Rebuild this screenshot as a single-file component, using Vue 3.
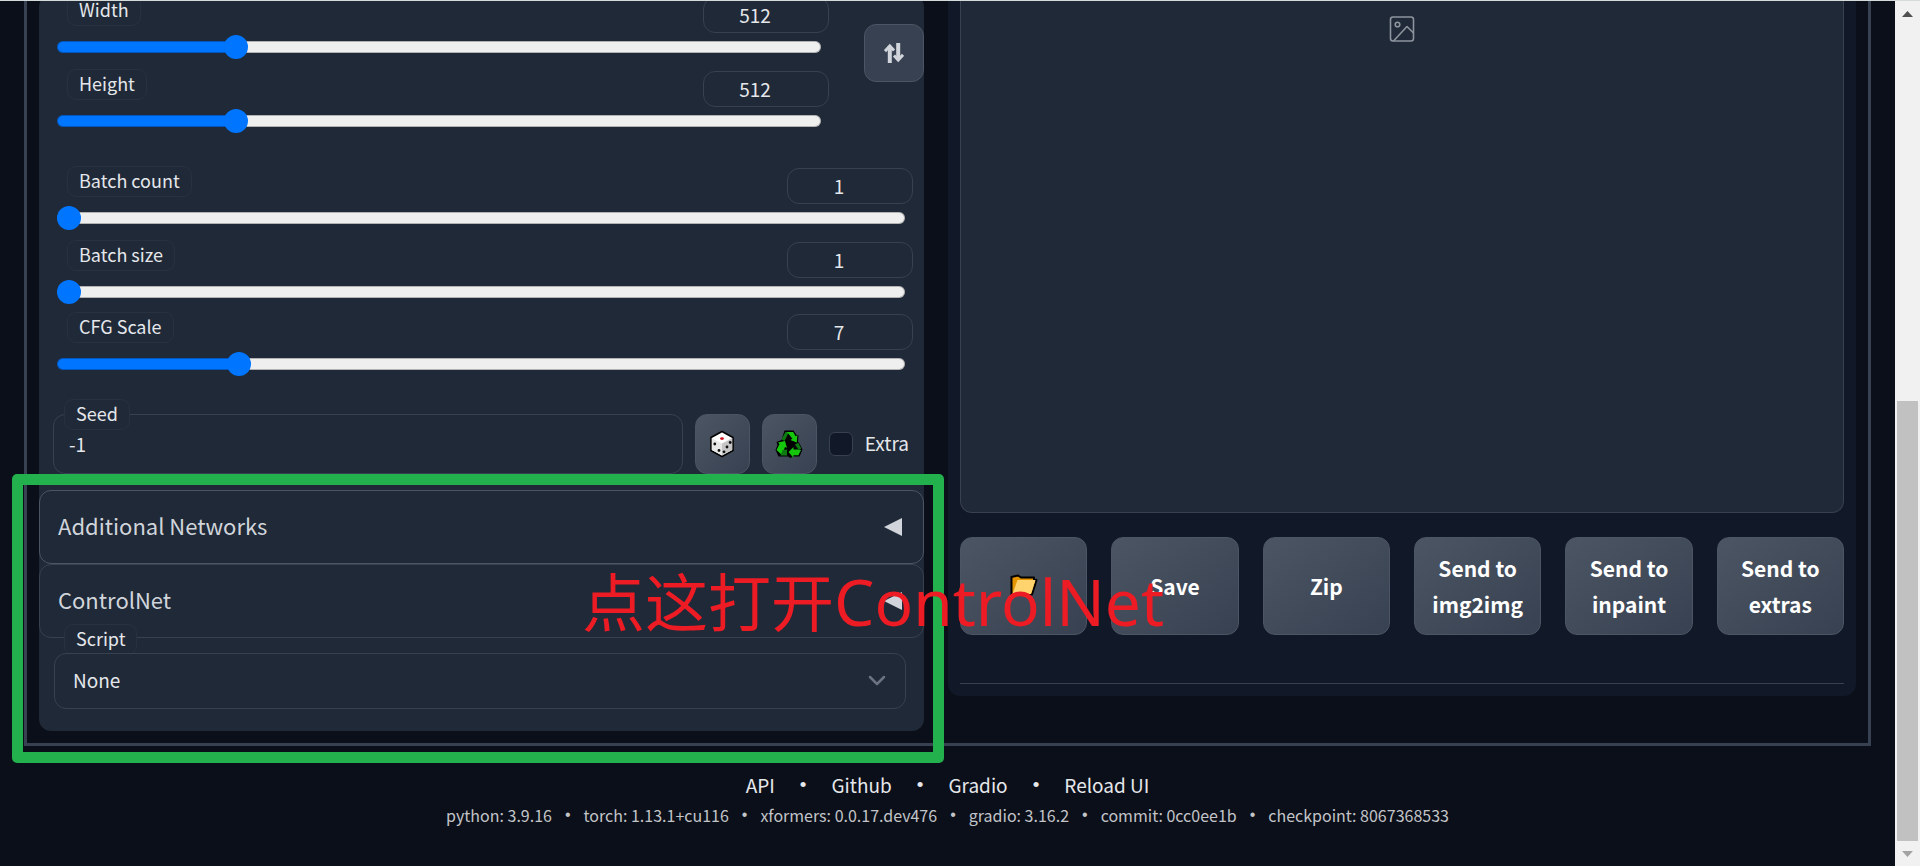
<script setup>
import { reactive, ref } from 'vue'

const size = reactive([
  { id: 'width', label: 'Width', value: 512, min: 64, max: 2048, step: 8 },
  { id: 'height', label: 'Height', value: 512, min: 64, max: 2048, step: 8 },
])
const batch = reactive([
  { id: 'batch-count', label: 'Batch count', value: 1, min: 1, max: 100, step: 1 },
  { id: 'batch-size', label: 'Batch size', value: 1, min: 1, max: 8, step: 1 },
])
const cfg = reactive([
  { id: 'cfg-scale', label: 'CFG Scale', value: 7, min: 1, max: 30, step: 0.5 },
])
const groups = [
  { name: 'batch', items: batch },
  { name: 'cfg', items: cfg },
]
const seed = ref('-1')
const extra = ref(false)
const script = ref('None')
const accordions = ['Additional Networks', 'ControlNet']
const actions = ['Save', 'Zip', 'Send to img2img', 'Send to inpaint', 'Send to extras']
const links = ['API', 'Github', 'Gradio', 'Reload UI']
const versions = [
  'python: 3.9.16',
  'torch: 1.13.1+cu116',
  'xformers: 0.0.17.dev476',
  'gradio: 3.16.2',
  'commit: 0cc0ee1b',
  'checkpoint: 8067368533',
]

const share = (s) => (s.value - s.min) / (s.max - s.min)

function swap() {
  const first = size[0].value
  size[0].value = size[1].value
  size[1].value = first
}
</script>

<template>
  <div class="window">
    <main class="page">
      <section class="tab">
        <div class="settings">
          <div class="dimensions">
            <div class="sliders">
              <div v-for="s in size" :key="s.id" class="slider">
                <div class="slider-head">
                  <label class="tag" :for="s.id">{{ s.label }}</label>
                  <input v-model.number="s.value" class="number" type="number" :aria-label="s.label + ' value'" />
                </div>
                <input
                  :id="s.id"
                  v-model.number="s.value"
                  class="range"
                  type="range"
                  :min="s.min"
                  :max="s.max"
                  :step="s.step"
                  :style="{ '--share': share(s) }"
                />
              </div>
            </div>
            <button class="tool swap" type="button" aria-label="Swap width and height" @click="swap">
              <svg width="20" height="20" viewBox="0 0 20 20" fill="none" stroke="currentColor" stroke-width="4">
                <path d="M5.800 20V3M14.200 0v17" />
                <path d="M1 8.200 5.800 3l4.200 4.600M10 12.400l4.200 4.600 4.800-5.200" stroke-width="3" />
              </svg>
            </button>
          </div>

          <div v-for="g in groups" :key="g.name" class="sliders" :class="g.name">
            <div v-for="s in g.items" :key="s.id" class="slider">
              <div class="slider-head">
                <label class="tag" :for="s.id">{{ s.label }}</label>
                <input v-model.number="s.value" class="number" type="number" :aria-label="s.label + ' value'" />
              </div>
              <input
                :id="s.id"
                v-model.number="s.value"
                class="range"
                type="range"
                :min="s.min"
                :max="s.max"
                :step="s.step"
                :style="{ '--share': share(s) }"
              />
            </div>
          </div>

          <div class="seed-row">
            <div class="seed">
              <label class="tag floating" for="seed">Seed</label>
              <input id="seed" v-model="seed" class="seed-input" type="text" />
            </div>
            <button class="tool" type="button" aria-label="Random seed" @click="seed = '-1'">
              <svg width="26" height="28" viewBox="0 0 26 28">
                <path d="M13 1.5 24 7.5V20.5L13 26.5 2 20.5V7.5Z" fill="#fff" stroke="#000" stroke-width="1.6" stroke-linejoin="round" />
                <path d="M2.8 8 13 13.5V25.6L2.8 20Z" fill="#e8e8e8" />
                <path d="M23.2 8 13 13.5V25.6L23.2 20Z" fill="#c6c6c6" />
                <ellipse cx="13" cy="8.6" rx="1.9" ry="1.4" fill="#d0101c" />
                <g fill="#111">
                  <circle cx="5.8" cy="14" r="1.4" />
                  <circle cx="10" cy="20.5" r="1.4" />
                  <circle cx="21.2" cy="12.5" r="1.4" />
                  <circle cx="18" cy="17" r="1.4" />
                  <circle cx="15" cy="21.8" r="1.4" />
                </g>
              </svg>
            </button>
            <button class="tool" type="button" aria-label="Reuse last seed">
              <svg width="28" height="28" viewBox="0 0 28 28" stroke-linejoin="round">
                <path d="M9.500.500h9l3 4.500 2 .500-.5 6 1.500 2 3 6-3 7H18l-2.500 1.500L13 26.500H3.500L.500 20l2-5-1-3 5-2Z" fill="#000" />
                <path d="M10.500 2 14 2l-4.500 9-3-1.800Z" fill="#0e7a12" />
                <path d="M12 2h6.200l2.400 4.200 1.800-1-.6 7.300-6.400-2.600 2-1.200Z" fill="#16c60c" />
                <path d="M3 12.500 10 11l2 7-2-1-3 8-5.500-5 3-6Z" fill="#16c60c" />
                <path d="m7.500 20 4.500-.5V25.500H5.500Z" fill="#0e7a12" />
                <path d="m13.500 22 5-5v2.400h4.500l3 .6-2.600 5.300h-5v2.400Z" fill="#16c60c" />
                <path d="m20 14.500 3.300-1.800 2.900 5.900-2.600 1.400Z" fill="#0e7a12" />
              </svg>
            </button>
            <label class="extra">
              <input v-model="extra" class="check" type="checkbox" />
              <span class="extra-text">Extra</span>
            </label>
          </div>

          <div class="accordions">
            <button v-for="a in accordions" :key="a" class="accordion" type="button">
              <span class="accordion-title">{{ a }}</span>
              <svg width="18" height="18" viewBox="0 0 18 18"><path d="M0 9 18 0v18Z" fill="#d1d5db" /></svg>
            </button>
          </div>

          <div class="script">
            <label class="tag script-tag" for="script">Script</label>
            <div class="select-wrap">
              <select id="script" v-model="script" class="select">
                <option>None</option>
              </select>
              <svg class="chevron" width="18" height="12" viewBox="0 0 18 12" fill="none">
                <path d="m2 2 7 7 7-7" stroke="#6b7280" stroke-width="2.500" stroke-linecap="round" stroke-linejoin="round" />
              </svg>
            </div>
          </div>
        </div>

        <div class="results">
          <div class="gallery">
            <svg width="26" height="26" viewBox="0 0 26 26" fill="none" stroke="#8d949e" stroke-width="1.600" stroke-linejoin="round">
              <rect x="1.500" y="1" width="23" height="24" rx="2.500" />
              <circle cx="8.500" cy="8.500" r="2.300" />
              <path d="M4.500 25 18 10.500l6.500 6.500" />
            </svg>
          </div>
          <div class="actions">
            <button class="action" type="button" aria-label="Open images folder">
              <svg width="28" height="24" viewBox="0 0 28 24" stroke-linejoin="round">
                <path d="M1.500 3 8 1.500l3 2h13V6h2.500L22 20.500H1.500Z" fill="#e59500" stroke="#000" stroke-width="2" />
                <path d="M7.500 6h18L21 20H2.500Z" fill="#ffd36e" />
              </svg>
            </button>
            <button v-for="a in actions" :key="a" class="action" type="button">{{ a }}</button>
          </div>
          <hr class="rule" />
        </div>
      </section>

      <footer class="footer">
        <nav class="links">
          <template v-for="(l, i) in links" :key="l">
            <span v-if="i" class="dot">•</span>
            <a href="#">{{ l }}</a>
          </template>
        </nav>
        <div class="versions">
          <template v-for="(v, i) in versions" :key="v">
            <span v-if="i" class="dot">•</span>
            <span>{{ v }}</span>
          </template>
        </div>
      </footer>
    </main>

    <div class="scrollbar" aria-hidden="true">
      <svg width="25" height="25" viewBox="0 0 25 25"><path d="M7 16 12.500 10 18 16Z" fill="#505050" /></svg>
      <div class="groove"><div class="handle"></div></div>
      <svg width="25" height="25" viewBox="0 0 25 25"><path d="M7 10 12.500 16 18 10Z" fill="#a3a3a3" /></svg>
    </div>

    <div class="highlight"></div>
    <p class="note">点这打开<span>ControlNet</span></p>
  </div>
</template>

<style>
body {
  background: #0b0f19;
}
</style>

<style scoped>
.window,
.window * {
  box-sizing: border-box;
}

.window {
  position: relative;
  display: flex;
  height: 100vh;
  overflow: hidden;
  border-top: 1px solid #d5dbda;
  background: #0b0f19;
  color: #e5e7eb;
  font-family: "Noto Sans CJK SC", "Noto Sans", sans-serif;
  font-size: 19px;
  line-height: 30px;
}

button,
input,
select {
  margin: 0;
  font: inherit;
  color: inherit;
}

.page {
  flex: 1;
  min-width: 0;
  display: flex;
  flex-direction: column;
  justify-content: flex-end;
  padding: 0 24px;
}

.tab {
  flex: none;
  display: grid;
  grid-template-columns: 885fr 908fr;
  gap: 24px;
  align-items: start;
  padding: 0 12px 12px;
  border: 3px solid #374151;
  border-top: 0;
}

.settings {
  padding-bottom: 22px;
  border-radius: 12px;
  background: #1f2937;
}

.dimensions {
  display: flex;
  gap: 24px;
  margin-bottom: 33px;
}

.sliders {
  flex: 1;
  display: flex;
  flex-direction: column;
  gap: 10px;
}

.cfg {
  margin-top: 8px;
}

.slider {
  height: 64px;
  padding: 0 19px 0 18px;
}

.slider-head {
  display: flex;
  justify-content: space-between;
  align-items: flex-start;
  height: 40px;
  margin-right: -8px;
  padding-left: 10px;
}

.tag {
  height: 31px;
  padding: 0 11px;
  border: 1px solid #28313f;
  border-radius: 9px;
  background: #1f2937;
  font-size: 18px;
  line-height: 27px;
}

.number {
  width: 126px;
  height: 36px;
  margin-top: 2px;
  padding: 0 32px 2px 10px;
  border: 1px solid #374151;
  border-radius: 12px;
  background: #1f2937;
  text-align: center;
  appearance: textfield;
}

.number::-webkit-inner-spin-button {
  appearance: none;
  margin: 0;
}

.range {
  display: block;
  width: 100%;
  height: 24px;
  appearance: none;
  background: none;
}

.range::-webkit-slider-runnable-track {
  height: 12px;
  border-radius: 6px;
  background: linear-gradient(
    to right,
    #0075ff calc(12px + (100% - 24px) * var(--share)),
    #efefef calc(12px + (100% - 24px) * var(--share))
  );
  box-shadow: inset 0 0 0 1px rgba(0, 0, 0, 0.25);
}

.range::-webkit-slider-thumb {
  appearance: none;
  width: 24px;
  height: 24px;
  margin-top: -6px;
  border-radius: 50%;
  background: #0075ff;
}

.tool {
  display: flex;
  align-items: center;
  justify-content: center;
  width: 55px;
  height: 60px;
  padding: 0;
  border: 1px solid #4b5563;
  border-radius: 12px;
  background: linear-gradient(to bottom right, #4b5563, #374151);
}

.swap {
  width: 60px;
  height: 58px;
  margin-top: 29px;
  background: #374151;
  color: #d1d5db;
}

.seed-row {
  display: flex;
  align-items: center;
  gap: 12px;
  margin-top: 38px;
  padding: 0 15px 0 14px;
}

.seed {
  position: relative;
  flex: 1;
}

.floating {
  position: absolute;
  top: -15px;
  left: 11px;
}

.seed-input {
  display: block;
  width: 100%;
  height: 60px;
  padding: 0 15px 2px;
  border: 1px solid #374151;
  border-radius: 12px;
  background: #1f2937;
}

.extra {
  display: flex;
  align-items: center;
  gap: 12px;
}

.extra-text {
  padding-bottom: 2px;
}

.check {
  width: 24px;
  height: 24px;
  border: 1px solid #374151;
  border-radius: 6px;
  background: #111827;
  appearance: none;
}

.check:checked {
  background: #0075ff;
}

.accordions {
  margin-top: 16px;
}

.accordion {
  display: flex;
  align-items: center;
  justify-content: space-between;
  width: 100%;
  height: 74px;
  padding: 0 21px 0 18px;
  border: 1px solid #374151;
  border-radius: 12px;
  background: #1f2937;
  color: #d1d5db;
  font-size: 22px;
}

.accordion-title {
  padding-bottom: 4px;
}

.accordion:first-child {
  border-color: #4b5563;
}

.script {
  display: flex;
  flex-direction: column;
  align-items: flex-start;
  margin-top: -14px;
  padding: 0 18px 0 15px;
}

.script-tag {
  position: relative;
  margin-left: 10px;
  margin-bottom: -2px;
}

.select-wrap {
  position: relative;
  width: 100%;
}

.select {
  display: block;
  width: 100%;
  height: 56px;
  padding: 0 18px 2px;
  border: 1px solid #374151;
  border-radius: 12px;
  background: #1f2937;
  appearance: none;
}

.chevron {
  position: absolute;
  top: 22px;
  right: 20px;
  pointer-events: none;
}

.results {
  display: flex;
  flex-direction: column;
  align-self: stretch;
  margin-bottom: 35px;
  padding: 0 12px 12px;
  border-radius: 0 0 12px 12px;
  background: #111827;
}

.gallery {
  flex: 1;
  display: flex;
  justify-content: center;
  padding-top: 21px;
  border: 1px solid #374151;
  border-top: 0;
  border-radius: 0 0 12px 12px;
  background: #1f2937;
}

.actions {
  display: grid;
  grid-template-columns: repeat(6, 1fr);
  gap: 24px;
  margin-top: 24px;
}

.action {
  display: flex;
  align-items: center;
  justify-content: center;
  height: 98px;
  padding: 0 12px;
  border: 1px solid #4b5563;
  border-radius: 12px;
  background: linear-gradient(to bottom right, #4b5563, #374151);
  color: #fff;
  font-size: 21px;
  font-weight: 700;
  line-height: 36px;
}

.rule {
  width: 100%;
  margin: 48px 0 0;
  border: 0;
  border-top: 1px solid #374151;
}

.footer {
  flex: none;
  height: 120px;
  padding-top: 24px;
}

.links,
.versions {
  display: flex;
  justify-content: center;
}

.links {
  gap: 25px;
}

.links a {
  color: inherit;
  text-decoration: none;
}

.dot {
  font-family: "Liberation Sans", sans-serif;
}

.versions {
  gap: 13px;
  color: #c2c4c8;
  font-size: 16px;
}

.scrollbar {
  flex: none;
  display: flex;
  flex-direction: column;
  width: 25px;
  background: #f1f1f1;
}

.groove {
  flex: 1;
  display: flex;
  flex-direction: column;
  justify-content: flex-end;
  padding: 0 2px;
}

.handle {
  height: 54%;
  background: #c1c1c1;
}

.highlight {
  position: absolute;
  top: 473px;
  left: 12px;
  width: 932px;
  height: 289px;
  border: 11px solid #22b14c;
  border-radius: 5px;
  pointer-events: none;
}

.note {
  position: absolute;
  top: 553px;
  left: 582px;
  margin: 0;
  color: #ed1c24;
  font-size: 63px;
  line-height: 90px;
  white-space: nowrap;
  pointer-events: none;
}

.note span {
  font-family: "Noto Sans", sans-serif;
  font-size: 64px;
}
</style>
